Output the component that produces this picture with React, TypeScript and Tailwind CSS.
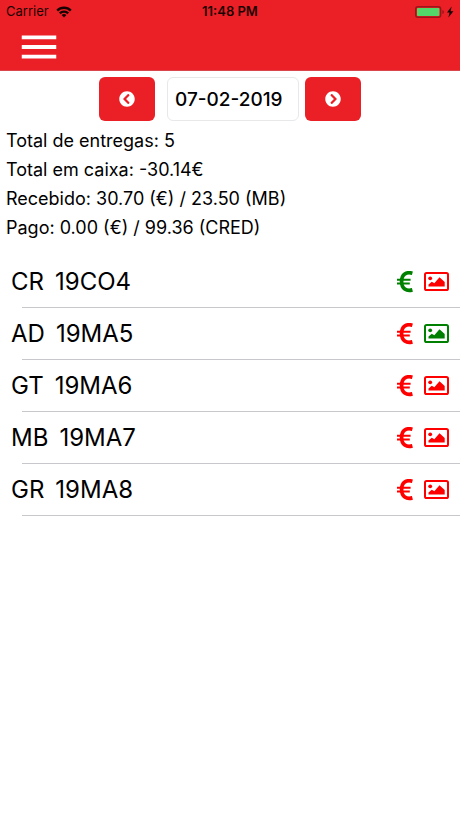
import { FaChevronCircleLeft, FaChevronCircleRight } from "react-icons/fa";
import { MdMenu } from "react-icons/md";

type Delivery = { client: string; code: string; paid: boolean; photo: boolean };

const deliveries: Delivery[] = [
  { client: "CR", code: "19CO4", paid: true, photo: false },
  { client: "AD", code: "19MA5", paid: false, photo: true },
  { client: "GT", code: "19MA6", paid: false, photo: false },
  { client: "MB", code: "19MA7", paid: false, photo: false },
  { client: "GR", code: "19MA8", paid: false, photo: false },
];

const totals = [
  "Total de entregas: 5",
  "Total em caixa: -30.14€",
  "Recebido: 30.70 (€) / 23.50 (MB)",
  "Pago: 0.00 (€) / 99.36 (CRED)",
];

const tint = (done: boolean) => (done ? "text-[#008000]" : "text-[#ff0000]");

function EuroIcon({ done }: { done: boolean }) {
  return (
    <svg viewBox="0 0 16 22" className={`h-[22px] w-4 ${tint(done)}`} fill="none" stroke="currentColor" aria-label={done ? "Pago" : "Por pagar"}>
      <path d="M15.4 2.2C9.4.6 4.600 3.200 4.600 10.500s4.800 10 10.800 8.400" strokeWidth="3.700" />
      <path d="M0 8.700h13.600M0 12.500h12.800" strokeWidth="2" />
    </svg>
  );
}

function PhotoIcon({ done }: { done: boolean }) {
  return (
    <svg viewBox="0 0 25 19" className={`h-[19px] w-[25px] ${tint(done)}`} aria-label={done ? "Com foto" : "Sem foto"}>
      <rect x="1" y="1" width="23" height="17" rx="1.600" fill="none" stroke="currentColor" strokeWidth="2" />
      <circle cx="6.200" cy="6.300" r="1.900" fill="currentColor" />
      <path d="M4.500 14.500v-2L7.800 9.800l2.500 1.500 5.200-6 5.200 4.700v4.500Z" fill="currentColor" />
    </svg>
  );
}

function StatusBar() {
  return (
    <div className="grid h-6 grid-cols-3 items-center px-1.5 text-[13px] text-[#1c0303]">
      <div className="flex items-center gap-[7px]">
        <span>Carrier</span>
        <svg viewBox="0 0 16 12" className="h-3 w-4" fill="none" stroke="#160202" strokeWidth="2.400" aria-label="Wi-Fi">
          <path d="M1.200 4.600a9.600 9.600 0 0 1 13.600 0" />
          <path d="M3.800 7.400a5.900 5.900 0 0 1 8.400 0" />
          <path d="M8 11.600 5.600 9.100a3.400 3.400 0 0 1 4.800 0Z" fill="#160202" stroke="none" />
        </svg>
      </div>
      <span className="text-center font-semibold whitespace-nowrap">11:48 PM</span>
      <svg viewBox="0 0 40 14" className="h-3.5 w-10 justify-self-end" aria-label="Bateria">
        <rect x="1.700" y="1.700" width="25" height="10.600" rx="2.200" fill="none" stroke="#9c1418" strokeWidth="1.400" />
        <rect x="3" y="3" width="22.400" height="8" rx="0.800" fill="#53d769" />
        <path d="M28.400 5v4q1.600-.5 1.600-2t-1.600-2Z" fill="#9c1418" />
        <path d="M37.600 1.600 33 7.600h2.600L34.400 12.400 39.400 6.200h-2.800Z" fill="#160202" />
      </svg>
    </div>
  );
}

export default function App() {
  return (
    <div className="min-h-screen bg-white font-['Inter','Liberation_Sans',sans-serif] text-black">
      <header className="border-b border-[#d8474b] bg-[#eb1f26]">
        <StatusBar />
        <div className="flex h-[46px] items-center px-4">
          <button type="button" aria-label="Menu" className="text-white">
            <MdMenu size={46} />
          </button>
        </div>
      </header>

      <main>
        <div className="flex justify-center pt-1.5">
          <button type="button" aria-label="Dia anterior" className="mr-3 flex h-11 w-14 items-center justify-center rounded-md bg-[#eb1f26] text-white">
            <FaChevronCircleLeft size={16} />
          </button>
          <input
            type="text"
            aria-label="Data"
            defaultValue="07-02-2019"
            className="mr-1.5 h-11 w-[132px] rounded-md border border-[#e6e8ea] bg-white px-[7px] text-[19px] font-medium text-black outline-none"
          />
          <button type="button" aria-label="Dia seguinte" className="flex h-11 w-14 items-center justify-center rounded-md bg-[#eb1f26] text-white">
            <FaChevronCircleRight size={16} />
          </button>
        </div>

        <section className="px-1.5 pt-[5px] text-[18px] leading-[29px]">
          {totals.map((line) => (
            <p key={line}>{line}</p>
          ))}
        </section>

        <ul className="pt-3.5">
          {deliveries.map((d) => (
            <li key={d.code}>
              <div className="flex h-[51px] items-center justify-between px-[11px]">
                <div className="flex gap-[11px] text-2xl">
                  <span>{d.client}</span>
                  <span>{d.code}</span>
                </div>
                <div className="flex items-center gap-[11px]">
                  <EuroIcon done={d.paid} />
                  <PhotoIcon done={d.photo} />
                </div>
              </div>
              <div className="ml-[22px] h-px bg-[#c8c7cc]" />
            </li>
          ))}
        </ul>
      </main>
    </div>
  );
}
